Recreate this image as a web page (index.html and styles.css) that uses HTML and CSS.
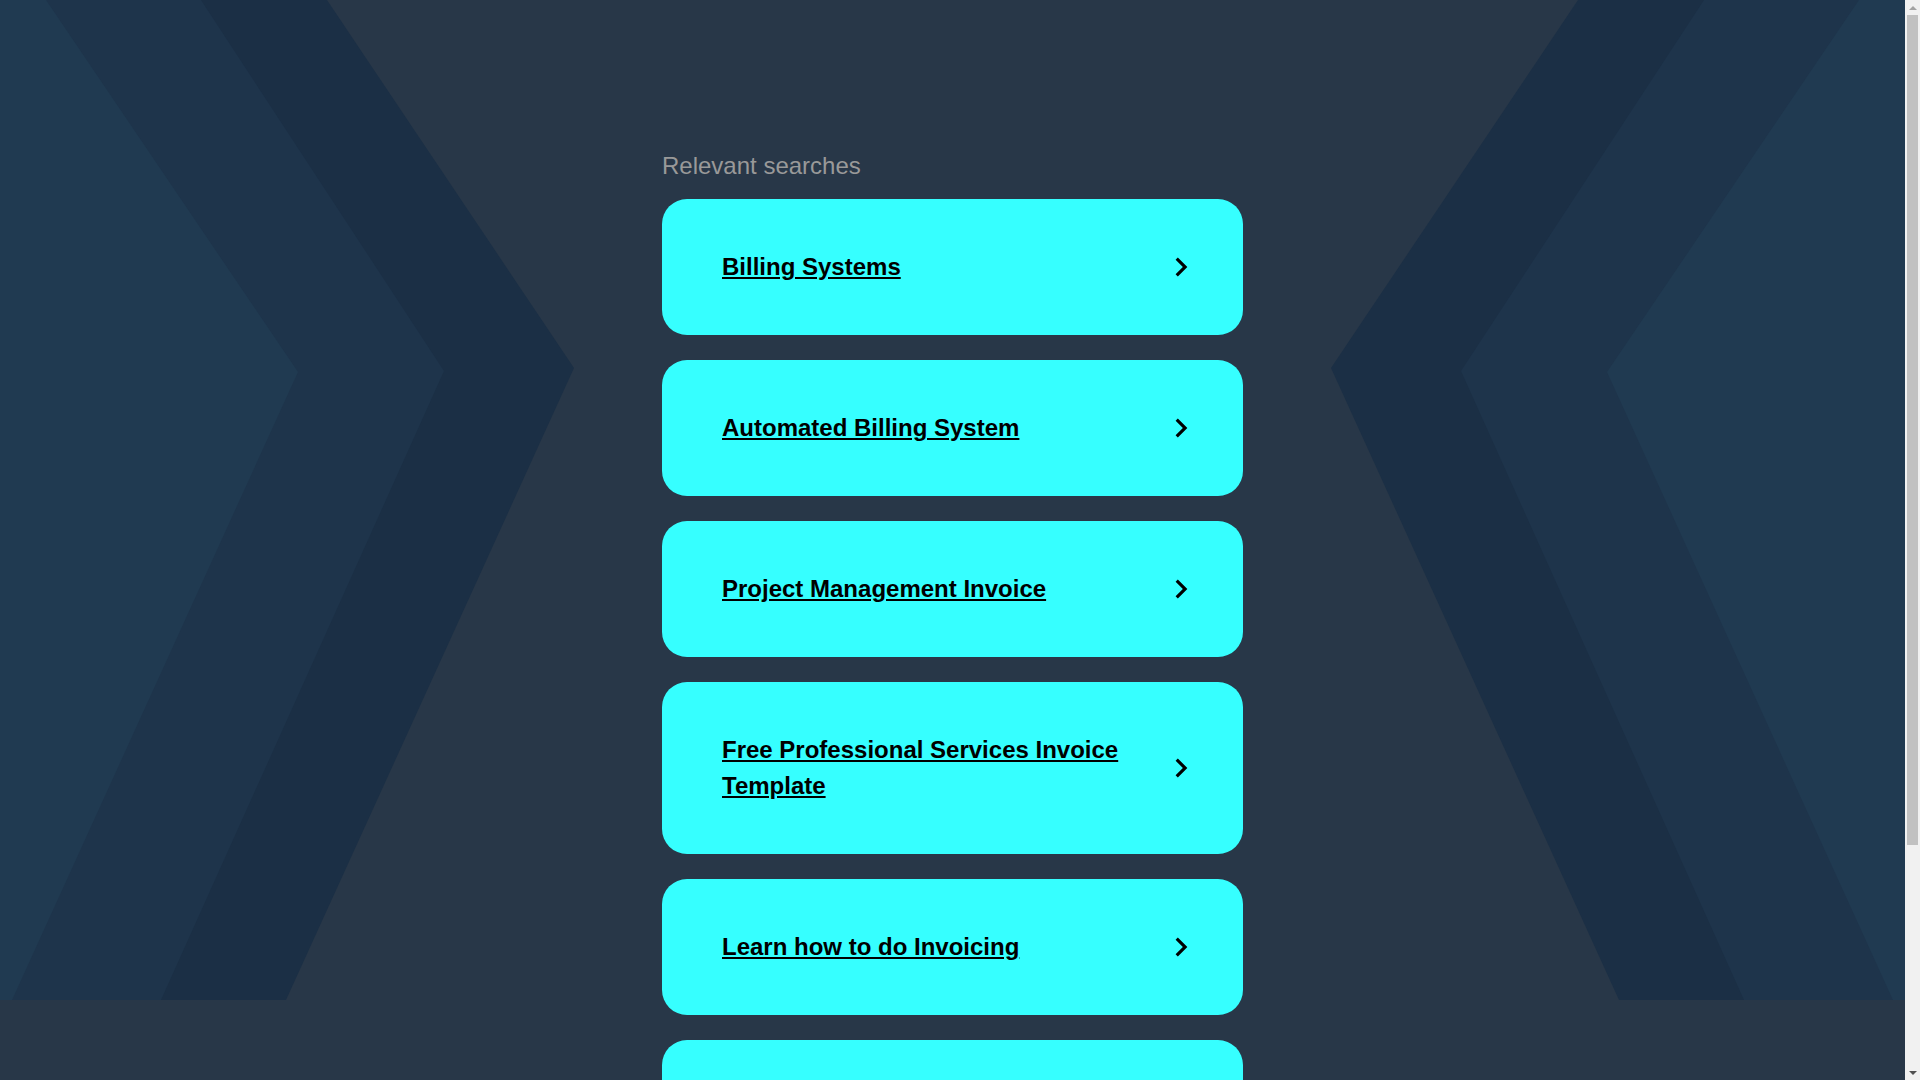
FILE: index.html
```html
<!DOCTYPE html>
<html lang="en">
<head>
<meta charset="utf-8">
<title>Relevant searches</title>
<link rel="stylesheet" href="styles.css">
</head>
<body>
<div class="page">
  <svg class="bg" viewBox="0 0 1905 1000" preserveAspectRatio="none" aria-hidden="true">
    <polygon class="b-dark" points="0,0 327,0 574,368 286,1000 0,1000"/>
    <polygon class="b-mid" points="0,0 201,0 444,371 161,1000 0,1000"/>
    <polygon class="b-light" points="0,0 46,0 298,372 12,1000 0,1000"/>
    <polygon class="b-dark" points="1905,0 1578,0 1331,368 1619,1000 1905,1000"/>
    <polygon class="b-mid" points="1905,0 1704,0 1461,371 1744,1000 1905,1000"/>
    <polygon class="b-light" points="1905,0 1859,0 1607,372 1893,1000 1905,1000"/>
  </svg>
  <main class="content">
    <h2 class="title">Relevant searches</h2>
    <ul class="list">
      <li class="card"><a class="link" href="#">Billing Systems</a><svg class="chev" viewBox="0 0 24 24"><path d="M10 6L8.59 7.41 13.17 12l-4.58 4.59L10 18l6-6z"/></svg></li>
      <li class="card"><a class="link" href="#">Automated Billing System</a><svg class="chev" viewBox="0 0 24 24"><path d="M10 6L8.59 7.41 13.17 12l-4.58 4.59L10 18l6-6z"/></svg></li>
      <li class="card"><a class="link" href="#">Project Management Invoice</a><svg class="chev" viewBox="0 0 24 24"><path d="M10 6L8.59 7.41 13.17 12l-4.58 4.59L10 18l6-6z"/></svg></li>
      <li class="card"><a class="link" href="#">Free Professional Services Invoice Template</a><svg class="chev" viewBox="0 0 24 24"><path d="M10 6L8.59 7.41 13.17 12l-4.58 4.59L10 18l6-6z"/></svg></li>
      <li class="card"><a class="link" href="#">Learn how to do Invoicing</a><svg class="chev" viewBox="0 0 24 24"><path d="M10 6L8.59 7.41 13.17 12l-4.58 4.59L10 18l6-6z"/></svg></li>
      <li class="card"><a class="link" href="#">Invoicing Software</a><svg class="chev" viewBox="0 0 24 24"><path d="M10 6L8.59 7.41 13.17 12l-4.58 4.59L10 18l6-6z"/></svg></li>
    </ul>
  </main>
</div>
<div class="scrollbar" aria-hidden="true">
  <div class="sb-btn"><span class="sb-up"></span></div>
  <div class="sb-track"><div class="sb-thumb"></div></div>
  <div class="sb-btn"><span class="sb-down"></span></div>
</div>
</body>
</html>
```

FILE: styles.css
```css
html, body {
  margin: 0;
  padding: 0;
  background: #283748;
}

body {
  font-family: "Liberation Sans", Arial, sans-serif;
}

.page {
  position: relative;
  width: calc(100% - 15px);
  padding-bottom: 189px;
}

.bg {
  position: absolute;
  top: 0;
  left: 0;
  width: 100%;
  height: 1000px;
  z-index: 0;
  display: block;
}

.b-dark { fill: #1b2f45; }
.b-mid { fill: #1e344b; }
.b-light { fill: #203a51; }

.content {
  position: relative;
  z-index: 1;
  width: 581px;
  margin: 0 auto;
  padding-top: 148px;
}

.title {
  margin: 0 0 15px;
  font-size: 24px;
  line-height: 36px;
  font-weight: normal;
  color: #999999;
}

.list {
  list-style: none;
  margin: 0;
  padding: 0;
  display: flex;
  flex-direction: column;
  gap: 25px;
}

.card {
  display: flex;
  align-items: center;
  background: #36ffff;
  border-radius: 25px;
  padding: 50px 43px 50px 60px;
}

.link {
  flex: 1;
  font-size: 24px;
  line-height: 36px;
  font-weight: bold;
  color: #000000;
  text-decoration: underline;
}

.chev {
  flex: none;
  width: 38px;
  height: 38px;
  margin: -1px 0;
  fill: #000000;
}

.scrollbar {
  position: fixed;
  top: 0;
  right: 0;
  bottom: 0;
  width: 15px;
  background: #f1f1f1;
  display: flex;
  flex-direction: column;
  z-index: 5;
}

.sb-btn {
  height: 15px;
  flex: none;
  display: flex;
  align-items: center;
  justify-content: center;
}

.sb-up {
  width: 0;
  height: 0;
  border-left: 4px solid transparent;
  border-right: 4px solid transparent;
  border-bottom: 4px solid #a3a3a3;
}

.sb-down {
  width: 0;
  height: 0;
  border-left: 4px solid transparent;
  border-right: 4px solid transparent;
  border-top: 4px solid #505050;
}

.sb-track {
  flex: 1;
  padding: 0 2px;
}

.sb-thumb {
  height: 830px;
  background: #c1c1c1;
}
```
